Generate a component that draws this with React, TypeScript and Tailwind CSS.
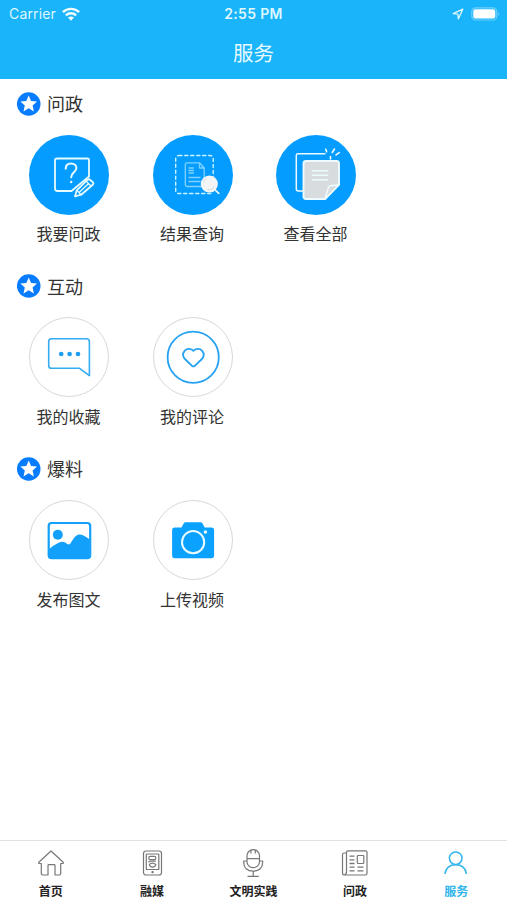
import type { ReactNode } from 'react';
import clsx from 'clsx';

interface ServiceItem {
  label: string;
  filled?: boolean;
  icon: ReactNode;
}

interface ServiceSection {
  title: string;
  items: ServiceItem[];
}

const AskIcon = () => (
  <svg viewBox="0 0 80 80" className="size-20" fill="none" stroke="#e6fbff" strokeWidth="1.8" strokeLinejoin="round" strokeLinecap="round">
    <path d="M42.500 56H28.500a2.500 2.500 0 0 1-2.500-2.500v-28a2 2 0 0 1 2-2h30.500a1.500 1.500 0 0 1 1.500 1.500V41.500L42.500 56Z" />
    <path d="M36.700 33.800c0-3.300 2.300-5.300 5.500-5.300 3 0 5.200 1.900 5.200 4.600 0 4.200-5.200 4.300-5.200 9.200" strokeWidth="2" />
    <path d="M42.200 46.900v.2" strokeWidth="2.400" />
    <path d="M46 61.300l1.800-6 10.800-10.600q1.200-1 2.400 0l3 2.600q1 1.100 0 2.200L52.200 59.700 46 61.300Z" fill="#049cff" />
    <path d="M47.800 55.300l4.400 4.400M57.200 46.300l4.700 4.700M50.800 56.800l8-7.600" strokeWidth="1.300" />
  </svg>
);

const QueryIcon = () => (
  <svg viewBox="0 0 80 80" className="size-20" fill="none" stroke="#a9eaff" strokeLinejoin="round" strokeLinecap="round">
    <rect x="22.700" y="20.500" width="37.500" height="38" rx="3" strokeWidth="1.400" strokeDasharray="3.200 2.800" stroke="#c9f4ff" />
    <path d="M46.500 27.800H34q-1.700 0-1.700 1.700v20.300q0 1.700 1.700 1.700H49.500q1.700 0 1.700-1.700V33L46.500 27.800V33h4.700" strokeWidth="1.300" stroke="#7fd2ff" />
    <path d="M36 33h4.500M36 35.500h4.500M36 38h4.500M36 42.500h11M36 46.500h11" strokeWidth="1.300" stroke="#7fd2ff" />
    <path d="M62 54.800l3.800 3.600" strokeWidth="1.600" stroke="#f2f9fc" />
    <circle cx="56.300" cy="49" r="8.600" fill="#f2f4f5" stroke="none" />
    <path d="M50.300 47a6.200 6.200 0 0 1 3-3.400M61.300 51.500a5.800 5.800 0 0 1-6.500 3" strokeWidth=".8" stroke="#c8d7de" />
  </svg>
);

const AllIcon = () => (
  <svg viewBox="0 0 80 80" className="size-20" fill="none" stroke="#edfbff" strokeWidth="1.500" strokeLinejoin="round" strokeLinecap="round">
    <path d="M49 18.700H22q-1.700 0-1.700 1.700V54q0 2 2 2h5" />
    <path d="M30 26h30.500q2.500 0 2.500 2.500v21.200L49 64H30q-2.500 0-2.500-2.500v-33Q27.500 26 30 26Z" fill="#d9dcde" strokeWidth="1.900" />
    <path d="M63 49.700l-8.500 1.100q-2 .3-2.200 2.300L49 64Z" fill="#d9dcde" />
    <path d="M36.300 35.700h15.400M36.300 40.200h15.400M36.300 44.700h15.400" />
    <path d="M49.800 14.200l.8 2.500M58.500 14l-2.300 3.500M63.200 17.700L60 19.900M54.500 21.500v2.500" strokeWidth="1.600" />
  </svg>
);

const ChatIcon = () => (
  <svg viewBox="0 0 80 80" className="size-20" fill="none" stroke="#35abf2" strokeWidth="1.600" strokeLinejoin="round">
    <path d="M22.500 21.800h35q2.900 0 2.900 2.900v34L50.200 51.200H22.500q-2.800 0-2.800-2.800V24.600q0-2.800 2.800-2.800Z" />
    <g fill="#1b9df2" stroke="none">
      <circle cx="32.200" cy="37" r="2.300" />
      <circle cx="40.600" cy="37" r="2.300" />
      <circle cx="49" cy="37" r="2.300" />
    </g>
  </svg>
);

const HeartIcon = () => (
  <svg viewBox="0 0 80 80" className="size-20" fill="none" stroke="#27a2f3" strokeWidth="1.800" strokeLinejoin="round">
    <circle cx="40.200" cy="40.200" r="25.600" />
    <path d="M40.400 33.900c-1.700-2-6-3.100-8.600-.2-2.600 3-1.800 6.400.6 8.800l6.400 6.200q1.600 1.300 3.200 0l6.400-6.200c2.400-2.400 3.200-5.800.6-8.800-2.600-2.900-6.900-1.800-8.600.2Z" />
  </svg>
);

const PictureIcon = () => (
  <svg viewBox="0 0 80 80" className="size-20">
    <rect x="19.700" y="23" width="41.500" height="35.200" rx="3" fill="#fff" stroke="#12a0fb" strokeWidth="2.200" />
    <circle cx="28.800" cy="34.800" r="5" fill="#12a0fb" />
    <path d="M20 49.300q4.500-4.300 10-6.900c4-1.700 6.500-.2 8.300 1.600 1.500 1 3 .3 4.300-2.500 5.500-9.600 9-8.600 17.900-2.300V56q0 2-2 2h-36.500q-2 0-2-2Z" fill="#12a0fb" />
  </svg>
);

const CameraIcon = () => (
  <svg viewBox="0 0 80 80" className="size-20">
    <path d="M21.800 27.500H28.500l2.300-4.200q.6-1 1.800-1h15q1.200 0 1.800 1l2.300 4.200h6.700q2.700 0 2.700 2.700v25.400q0 2.700-2.700 2.700H21.800q-2.700 0-2.700-2.700V30.200q0-2.700 2.700-2.700Z" fill="#0ba1ff" />
    <circle cx="40.100" cy="42.200" r="11.100" fill="none" stroke="#e9fbff" strokeWidth="2" />
    <circle cx="52.400" cy="32" r="1.800" fill="#e9fbff" />
  </svg>
);

const sections: ServiceSection[] = [
  {
    title: '问政',
    items: [
      { label: '我要问政', filled: true, icon: <AskIcon /> },
      { label: '结果查询', filled: true, icon: <QueryIcon /> },
      { label: '查看全部', filled: true, icon: <AllIcon /> },
    ],
  },
  {
    title: '互动',
    items: [
      { label: '我的收藏', icon: <ChatIcon /> },
      { label: '我的评论', icon: <HeartIcon /> },
    ],
  },
  {
    title: '爆料',
    items: [
      { label: '发布图文', icon: <PictureIcon /> },
      { label: '上传视频', icon: <CameraIcon /> },
    ],
  },
];

// Tab glyphs share a 28x28 box and take the tab's text colour.
const tabs = [
  {
    label: '首页',
    path: <path d="M1.800 13.300L14 2l12.200 11.300q.6 1.200-.7 1.200H23.700V24.600q0 1.400-1.400 1.400H18V16.500q0-.8-.8-.8h-5.400q-.8 0-.8.800V26H5.700q-1.400 0-1.400-1.400V14.500H2.500q-1.300 0-.7-1.200Z" />,
  },
  {
    label: '融媒',
    path: (
      <>
        <rect x="5.500" y="2" width="18" height="24" rx="2.500" />
        <rect x="8.300" y="5" width="12.500" height="15.500" rx=".6" />
        <rect x="10.900" y="7.300" width="6.800" height="3.400" rx="1.200" />
        <path d="M17.800 12.200h-5.500q-1.500 0-1.500 1.300M11.300 15.500q3-2.800 6.500 0-.5 2.600-3.300 2.600t-3.200-2.600M14.500 22v2.300M13.300 23.100h2.500" />
      </>
    ),
  },
  {
    label: '文明实践',
    path: (
      <>
        <rect x="8" y=".7" width="12.500" height="18" rx="6" />
        <path d="M8 9.700h12.500M12 1v3.500M16.300 1v3.500M8 12H4.700v1c0 5.700 3.500 9.200 9.500 9.200s9.500-3.500 9.500-9.200v-1H20.500M14.200 22.200V27.200M8.500 27.300h11.300" />
      </>
    ),
  },
  {
    label: '问政',
    path: (
      <>
        <path d="M5.500 22.500V3.300q0-1.500 1.500-1.500h17.500q1.500 0 1.500 1.500v21q0 1.700-1.700 1.700H3.500q-2 0-2-2V5.500q0-1.500 1.500-1.500h2.500M5.500 22.500q0 3-2 3" />
        <rect x="16.300" y="6.500" width="6.500" height="8" rx=".8" />
        <path d="M8.500 7.200h5M8.500 10.800h5M8.500 14.500h5M8.500 18.200h5M8.500 21.800h5M16.500 18.200h6M16.500 21.800h6" strokeWidth="1.300" />
      </>
    ),
  },
  {
    label: '服务',
    active: true,
    path: (
      <>
        <circle cx="13.700" cy="9.200" r="6.300" strokeWidth="1.500" />
        <path d="M3 25C3.800 19 8 15.700 13.700 15.700s9.900 3.300 10.700 9.300" strokeWidth="1.500" />
      </>
    ),
  },
];

function StatusBar() {
  return (
    <div className="relative flex h-[27px] items-center justify-between pl-[9px] pr-[7px] text-[#dff7ff]">
      <div className="flex items-center gap-[6px] font-['Inter','Noto_Sans',sans-serif]">
        <span className="text-[14px] tracking-[0.15px]">Carrier</span>
        <svg viewBox="0 0 18 14" className="h-[14px] w-[18px]" fill="none" stroke="#f4fdff" strokeWidth="2.400">
          <path d="M.9 5.200a11.500 11.500 0 0 1 16.200 0M3.900 8.300a7.300 7.300 0 0 1 10.200 0" />
          <path d="M9 13.700L6 10.600q3-2.300 6 0Z" fill="#f4fdff" stroke="none" />
        </svg>
      </div>
      <span className="absolute inset-x-0 top-[4px] text-center font-['Inter',sans-serif] text-[14px] font-semibold leading-5 tracking-[0.35px]">2:55 PM</span>
      <div className="flex items-center gap-[7px]">
        <svg viewBox="0 0 12 12" className="size-3" fill="none" stroke="#dff7ff" strokeWidth="1.300" strokeLinejoin="round">
          <path d="M10.800 1.200L1.200 5.700l4.600.5.600 4.600Z" />
        </svg>
        <svg viewBox="0 0 29 14" className="h-[14px] w-[29px]">
          <rect x=".8" y=".8" width="25" height="12.200" rx="4" fill="none" stroke="#6fd0fb" strokeWidth="1.200" />
          <rect x="2.300" y="2.300" width="22" height="9.200" rx="2.300" fill="#fff" />
          <path d="M27 5q2 2 0 4Z" fill="#6fd0fb" />
        </svg>
      </div>
    </div>
  );
}

function SectionTitle({ title }: { title: string }) {
  return (
    <h2 className="flex h-7 items-center gap-[6px] pl-[17px] text-[18px] text-[#333]">
      <svg viewBox="0 0 24 24" className="size-6">
        <circle cx="11.700" cy="12" r="11.800" fill="#087cff" />
        <path d="M11.700 3.500l2.400 5.500 5.900.6-4.400 3.900 1.300 5.900-5.200-3.100-5.200 3.100 1.300-5.900-4.400-3.900 5.900-.6Z" fill="#fff" />
      </svg>
      {title}
    </h2>
  );
}

export default function App() {
  return (
    <div className="flex h-screen w-full flex-col bg-white font-['Noto_Sans_CJK_SC',sans-serif]">
      <header className="h-[79px] shrink-0 bg-[#19b4fa]">
        <StatusBar />
        <h1 className="flex h-[51px] items-center justify-center text-[20.500px] text-[#e8faff]">服务</h1>
      </header>

      <main className="flex-1 pt-[10.600px]">
        {sections.map((section) => (
          <section key={section.title} className="h-[182.700px]">
            <SectionTitle title={section.title} />
            <div className="flex gap-[43.500px] pl-[29px] pt-[17px]">
              {section.items.map((item) => (
                <div key={item.label} className="flex w-20 flex-col items-center">
                  <div
                    className={clsx(
                      'flex size-20 items-center justify-center rounded-full',
                      item.filled ? 'bg-[#049cff]' : 'border border-[#d8d8d8] bg-white',
                    )}
                  >
                    <span className="size-20 shrink-0">{item.icon}</span>
                  </div>
                  <span className="mr-px mt-[6.600px] whitespace-nowrap text-[16px] leading-6 text-[#333]">{item.label}</span>
                </div>
              ))}
            </div>
          </section>
        ))}
      </main>

      <nav className="grid h-[60px] shrink-0 grid-cols-5 border-t border-[#e2e2e2]">
        {tabs.map((tab) => (
          <div
            key={tab.label}
            className={clsx('flex flex-col items-center pt-[8px]', tab.active ? 'text-[#31b5eb]' : 'text-[#777]')}
          >
            <svg viewBox="0 0 28 28" className="size-7" fill="none" stroke="currentColor" strokeWidth="1.200" strokeLinejoin="round">
              {tab.path}
            </svg>
            <span className={clsx('mt-[6px] text-[12px] font-bold leading-4', !tab.active && 'text-[#222]')}>{tab.label}</span>
          </div>
        ))}
      </nav>
    </div>
  );
}
